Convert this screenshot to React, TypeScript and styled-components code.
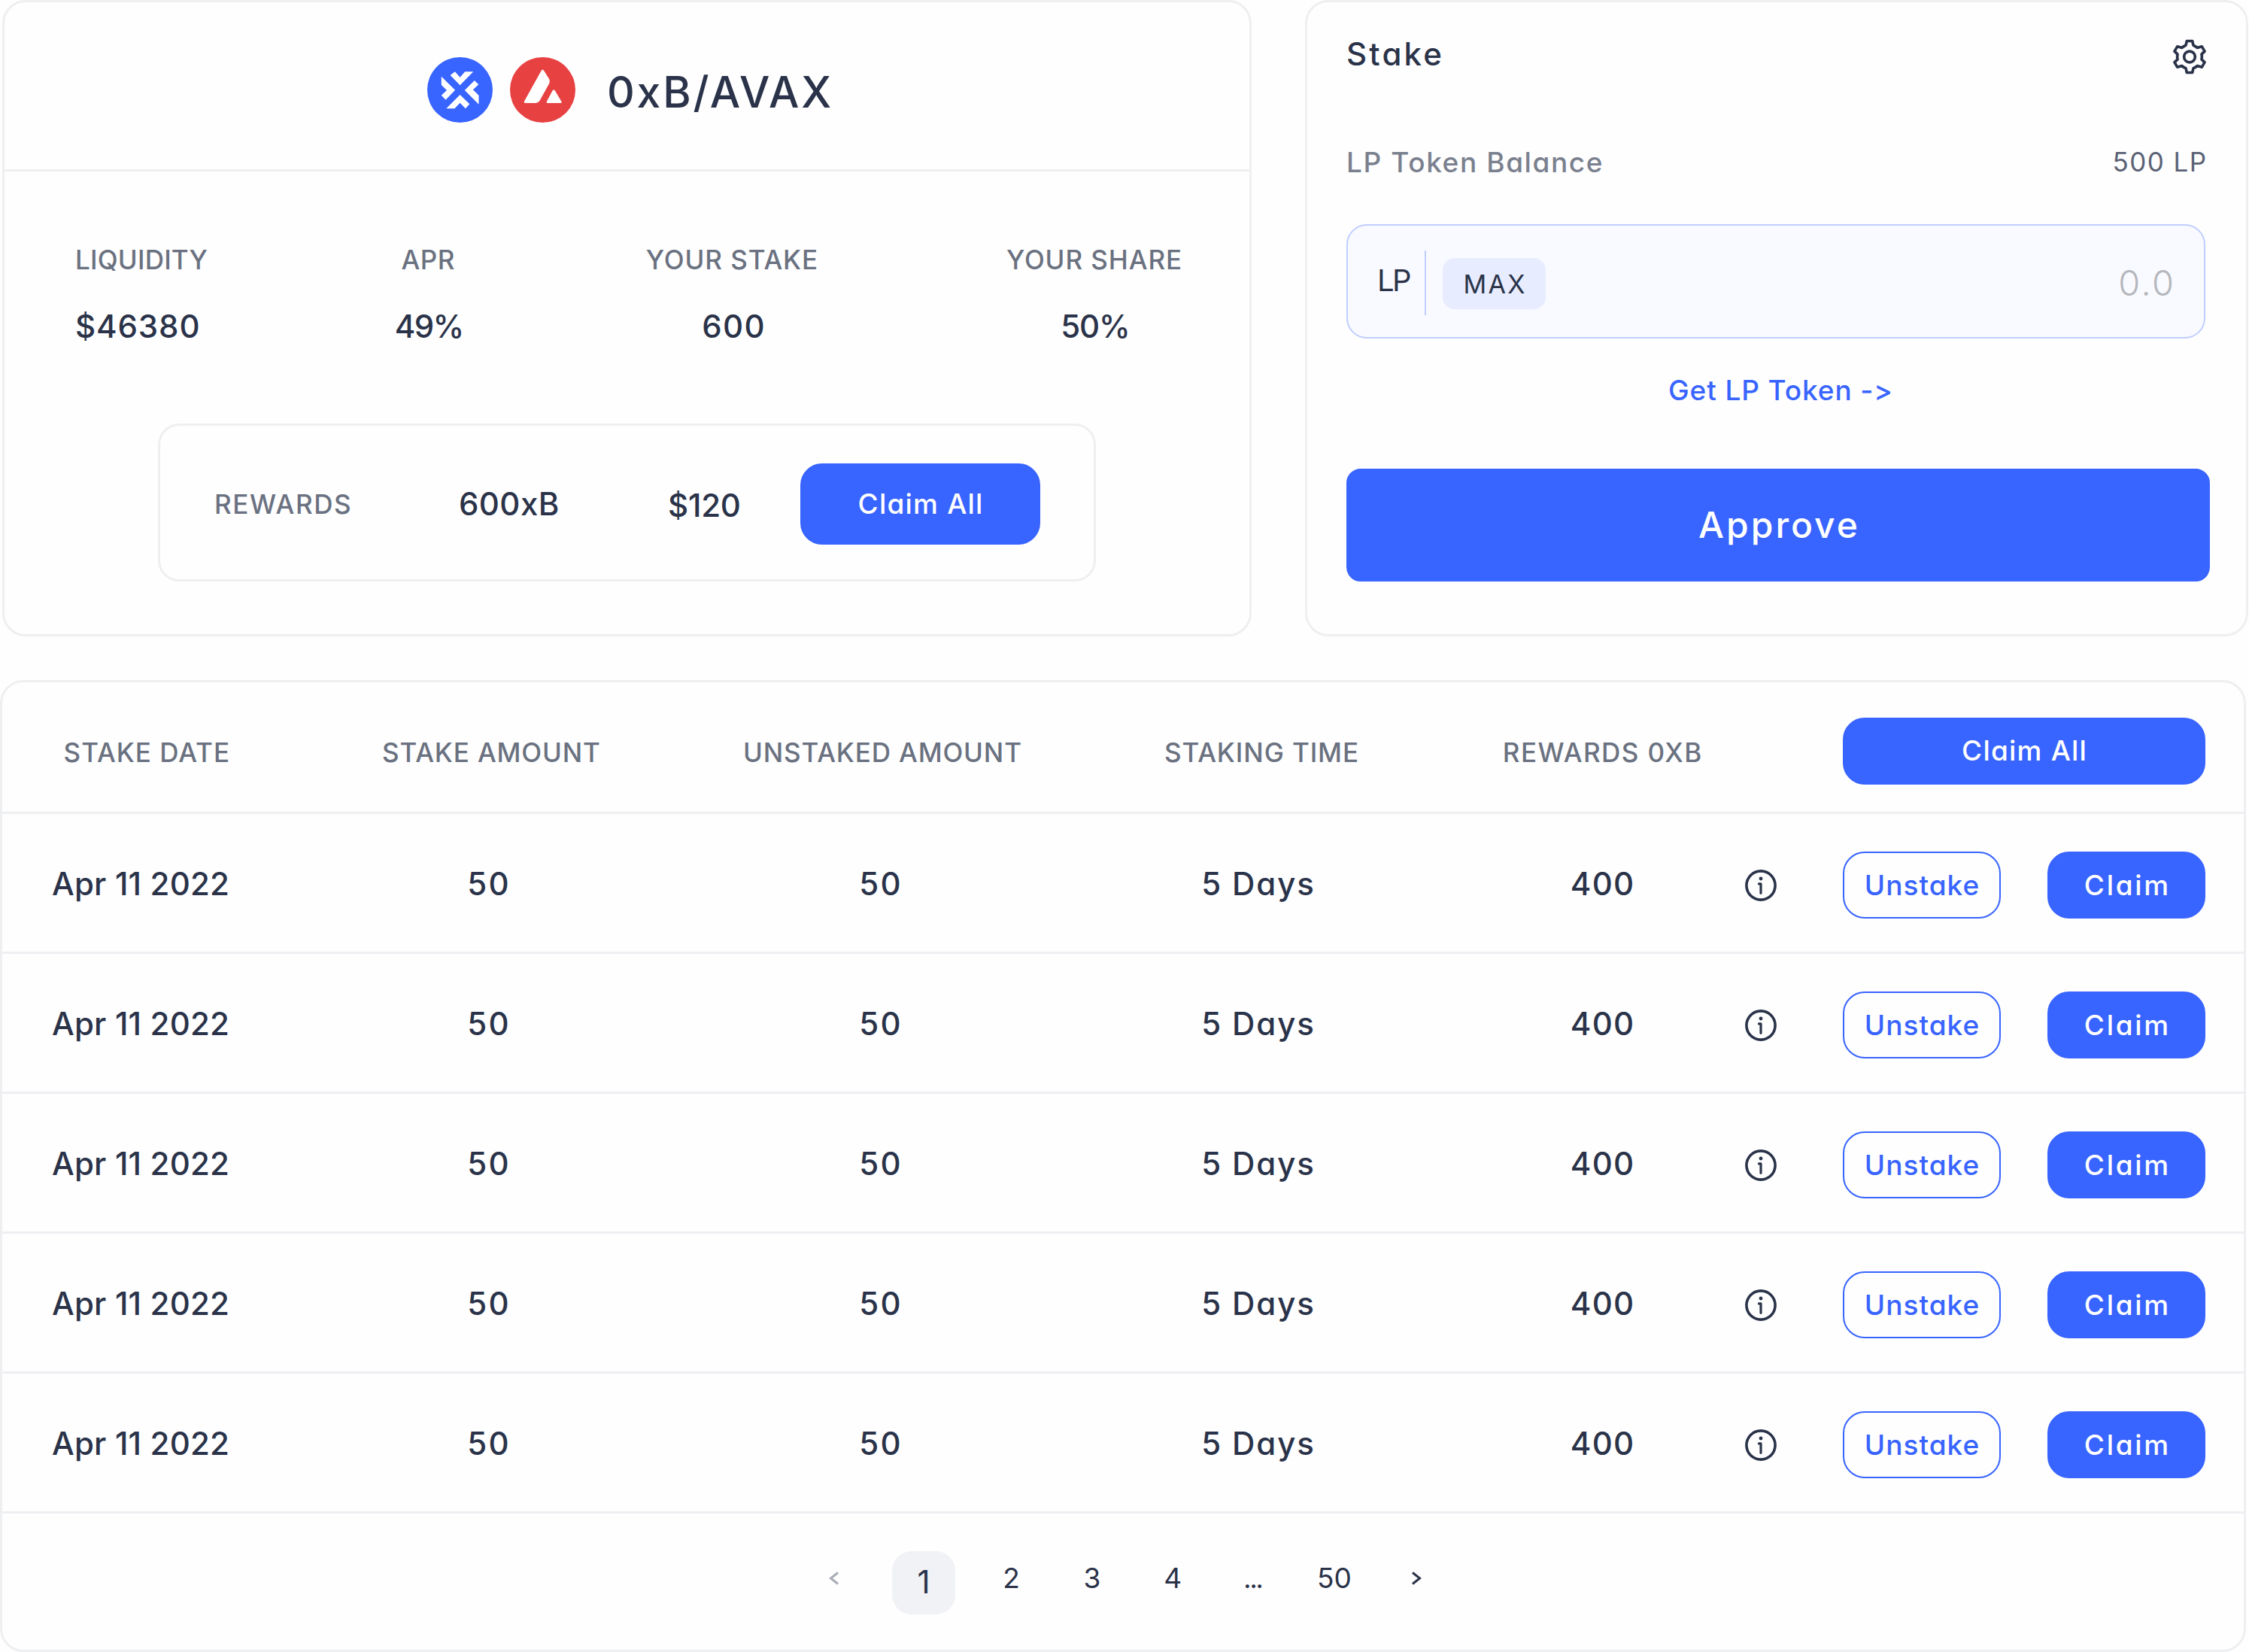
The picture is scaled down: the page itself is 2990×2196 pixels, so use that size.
import styled, { createGlobalStyle } from 'styled-components';

const GlobalStyle = createGlobalStyle`
  * {
    box-sizing: border-box;
  }

  body {
    margin: 0;
    background: #fefefe;
    color: #2a3349;
    font-family: Inter, "Liberation Sans", sans-serif;
    font-feature-settings: 'cv11', 'calt' 0;
  }

  button {
    font: inherit;
    font-feature-settings: inherit;
    padding: 0;
    border: none;
  }
`;

const Page = styled.main`
  width: 2990px;
  height: 2196px;
  overflow: hidden;
`;

const TopRow = styled.div`
  display: flex;
  gap: 71px;
  padding-left: 3px;
`;

const Panel = styled.section`
  border: 3px solid #eeeff1;
  border-radius: 31px;
`;

const Text = styled.span<{ $size: number; $spacing?: number; $weight?: number; $color?: string }>`
  display: inline-block;
  white-space: nowrap;
  line-height: 1;
  font-size: ${p => p.$size}px;
  font-weight: ${p => p.$weight || 500};
  letter-spacing: ${p => p.$spacing || 0}px;
  margin-right: ${p => -(p.$spacing || 0)}px;
  color: ${p => p.$color || 'inherit'};
`;

const Button = styled.button<{ $width: number; $height: number; $outline?: boolean }>`
  display: flex;
  align-items: center;
  justify-content: center;
  flex-shrink: 0;
  width: ${p => p.$width}px;
  height: ${p => p.$height}px;
  padding-bottom: 1px;
  border-radius: 29px;
  border: 2px solid #3864ff;
  background: ${p => (p.$outline ? '#fefefe' : '#3864ff')};
  color: ${p => (p.$outline ? '#3864ff' : '#fff')};
`;

/* pool */

const PoolPanel = styled(Panel)`
  width: 1661px;
  height: 846px;
`;

const PoolHead = styled.header`
  display: flex;
  align-items: center;
  height: 225px;
  padding: 11px 0 0 562px;
  border-bottom: 3px solid #eeeff1;
`;

const Logo = styled.svg`
  width: 87px;
  height: 87px;
  margin-right: 22.5px;
`;

const PoolName = styled.h1`
  display: flex;
  margin: 5px 0 0 20px;
`;

const Stats = styled.div`
  display: grid;
  grid-template-columns: 419px 100px 708px 255px;
  padding: 100px 0 0 94px;
`;

const Stat = styled.div`
  display: flex;
  flex-direction: column;
  align-items: center;
  gap: 50px;

  &:first-child {
    align-items: flex-start;
  }

  &:not(:first-child) > :last-child {
    padding-left: 4px;
  }
`;

const Rewards = styled.div`
  display: flex;
  align-items: center;
  width: 1247px;
  height: 210px;
  margin: 108px 0 0 204px;
  padding: 4px 0 0 72px;
  border: 3px solid #eeeff1;
  border-radius: 28px;
`;

const RewardItem = styled.div<{ $width: number; $down?: number }>`
  display: flex;
  width: ${p => p.$width}px;
  padding-top: ${p => p.$down || 0}px;
`;

/* stake */

const StakePanel = styled(Panel)`
  width: 1254px;
  height: 846px;
  padding: 48px 48px 0 52px;
`;

const StakeHead = styled.header`
  display: flex;
  justify-content: space-between;
  height: 48px;
  padding-right: 5px;
`;

const Gear = styled.svg`
  width: 44px;
  height: 47px;
  margin-top: 1px;
`;

const Balance = styled.div`
  display: flex;
  align-items: center;
  justify-content: space-between;
  margin-top: 98px;
  padding-right: 5px;
`;

const AmountBox = styled.div`
  display: flex;
  align-items: center;
  width: 1142px;
  height: 152px;
  margin-top: 64px;
  padding: 3px 40px 0 39px;
  border: 2px solid #c0ceff;
  border-radius: 27px;
  background: #f9faff;
`;

const Unit = styled.div`
  display: flex;
  width: 63px;
  padding-bottom: 5px;
`;

const Separator = styled.div`
  width: 2px;
  height: 86px;
  background: #c0ceff;
`;

const MaxButton = styled.button`
  display: flex;
  align-items: center;
  justify-content: center;
  width: 137px;
  height: 68px;
  margin: 2px auto 0 22px;
  padding-top: 3px;
  border-radius: 16px;
  background: #e7ecff;
  color: inherit;
`;

const GetToken = styled.a`
  display: flex;
  justify-content: center;
  margin: 50px 0 86px;
  padding-left: 6px;
  color: #3864ff;
`;

const Approve = styled(Button)`
  border-radius: 19px;
`;

/* table */

const TablePanel = styled(Panel)`
  width: 2986px;
  height: 1292px;
  margin-top: 58px;
`;

const HeadRow = styled.div`
  display: flex;
  align-items: center;
  height: 175px;
  padding-top: 10px;
  border-bottom: 3px solid #eeeff2;
`;

const Row = styled.div`
  display: flex;
  align-items: center;
  height: 186px;
  padding-top: 6px;
  border-bottom: 3px solid #eeeff2;
`;

const HeadCell = styled.div<{ $width: number; $gap: number; $shift: number; $right?: boolean }>`
  display: flex;
  justify-content: ${p => (p.$right ? 'flex-end' : 'center')};
  width: ${p => p.$width}px;
  margin-left: ${p => p.$gap}px;
  padding: 5px 0 0 ${p => p.$shift}px;
`;

const Cell = styled.div<{ $width: number; $gap: number; $right?: boolean }>`
  display: flex;
  justify-content: ${p => (p.$right ? 'flex-end' : 'center')};
  width: ${p => p.$width}px;
  margin-left: ${p => p.$gap}px;
  padding-bottom: 3px;
`;

const InfoIcon = styled.svg`
  width: 42px;
  height: 42px;
  margin-left: 40px;
`;

const Actions = styled.div<{ $gap: number }>`
  display: flex;
  justify-content: space-between;
  width: 482px;
  margin-left: ${p => p.$gap}px;
`;

const Pagination = styled.nav`
  display: flex;
  padding: 50px 0 0 1049px;
`;

const PageItem = styled.div<{ $width?: number }>`
  display: flex;
  align-items: center;
  justify-content: center;
  width: ${p => p.$width || 107.3}px;
  height: 84px;
  padding-bottom: 13px;
`;

const CurrentPage = styled.div`
  display: flex;
  align-items: center;
  justify-content: center;
  width: 84px;
  height: 84px;
  margin: 0 21px;
  padding-bottom: 3px;
  border-radius: 26px;
  background: #f1f2f5;
`;

const gray = '#6a7180'

const stats = [
    { label: 'LIQUIDITY', labelSpacing: 0.2, value: '$46380', valueSpacing: 0.9 },
    { label: 'APR', labelSpacing: 0.4, value: '49%', valueSpacing: -1.6 },
    { label: 'YOUR STAKE', labelSpacing: 0.9, value: '600', valueSpacing: 1.4 },
    { label: 'YOUR SHARE', labelSpacing: 0.9, value: '50%', valueSpacing: -1.2 },
]

const columns = [
    { key: 'date', label: 'STAKE DATE', width: 302, gap: 0, shift: 0, head: 1, body: 0.2 },
    { key: 'staked', label: 'STAKE AMOUNT', width: 360, gap: 164, shift: 8, head: 0.85, body: 2.2 },
    { key: 'unstaked', label: 'UNSTAKED AMOUNT', width: 400, gap: 141, shift: 6, head: 0.85, body: 2.2 },
    { key: 'time', label: 'STAKING TIME', width: 340, gap: 132, shift: 10, head: 0.9, body: 1.9 },
    { key: 'rewards', label: 'REWARDS 0XB', width: 300, gap: 138, shift: 0, head: 1.4, body: 1.3 },
] as const

const stakes = Array.from({ length: 5 }, (_, id) => ({
    id,
    date: 'Apr 11 2022',
    staked: '50',
    unstaked: '50',
    time: '5 Days',
    rewards: '400',
}))

const ZeroXLogo = () => (
    <Logo viewBox="0 0 87 87">
        <circle cx="43.5" cy="43.5" r="43.5" fill="#3864ff" />
        <g fill="#fff">
            <path d="M30.6 24 36.8 19.3 43.6 26.7 50.2 19.3H61.3L43.6 37.3Z" />
            <path d="M18.8 25.7 37.1 43.7 24.5 56.7 18.8 50.7 26 44 18.8 37Z" />
            <path d="M62.8 31 68.3 36.3 60.9 43.3 68.5 50.7V62.7L49.8 44Z" />
            <path d="M43.6 50 56.3 62.3 50.9 68.3 43.6 60.7 36.4 68.3H25.3Z" />
        </g>
    </Logo>
)

const AvaxLogo = () => (
    <Logo viewBox="0 0 87 87">
        <circle cx="43.5" cy="43.5" r="43.5" fill="#e84142" />
        <g fill="#fff">
            <path d="M20.5 61Q17.8 61 19.2 58.3L41.6 18Q43.4 14.8 45.2 18L51.8 28.6Q53.8 32 51.9 35.4L40 57Q37.8 61 33.5 61Z" />
            <path d="M50.6 61Q47.6 61 49.1 58.4L56.4 44.8Q58.2 41.6 60 44.8L68.2 58.4Q69.7 61 66.7 61Z" />
        </g>
    </Logo>
)

const GearIcon = () => (
    <Gear viewBox="-66 -70 132 140" fill="none" stroke="#2a3349" strokeWidth="11" strokeLinejoin="round">
        <path d="M-11 -63H11L15 -46Q23 -43 31 -36L49 -41L60 -22L48 -10Q50 0 48 10L60 22L49 41L31 36Q23 43 15 46L11 63H-11L-15 46Q-23 43 -31 36L-49 41L-60 22L-48 10Q-50 0 -48 -10L-60 -22L-49 -41L-31 -36Q-23 -43 -15 -46Z" />
        <circle r="22" />
    </Gear>
)

const Info = () => (
    <InfoIcon viewBox="0 0 42 42" fill="none" stroke="#2a3349">
        <circle cx="21" cy="21" r="19.1" strokeWidth="3.6" />
        <circle cx="21" cy="12" r="2.4" fill="#2a3349" stroke="none" />
        <path d="M18.4 18.9H21V31.3" strokeWidth="3.2" strokeLinecap="round" strokeLinejoin="round" />
    </InfoIcon>
)

const Arrow = ({ d, color }: { d: string; color: string }) => (
    <svg width="15" height="18" viewBox="0 0 15 18" fill="none" stroke={color} strokeWidth="3">
        <path d={d} />
    </svg>
)

const App = () => {
    return (
        <Page>
            <GlobalStyle />
            <TopRow>
                <PoolPanel>
                    <PoolHead>
                        <ZeroXLogo />
                        <AvaxLogo />
                        <PoolName>
                            <Text $size={57} $spacing={2.8}>0xB/AVAX</Text>
                        </PoolName>
                    </PoolHead>
                    <Stats>
                        {stats.map(s => (
                            <Stat key={s.label}>
                                <Text $size={35} $spacing={s.labelSpacing} $color={gray}>{s.label}</Text>
                                <Text $size={42} $spacing={s.valueSpacing}>{s.value}</Text>
                            </Stat>
                        ))}
                    </Stats>
                    <Rewards>
                        <RewardItem $width={325}>
                            <Text $size={35} $spacing={1.6} $color={gray}>REWARDS</Text>
                        </RewardItem>
                        <RewardItem $width={278}>
                            <Text $size={42} $spacing={0.4}>600xB</Text>
                        </RewardItem>
                        <RewardItem $width={176} $down={3}>
                            <Text $size={42} $spacing={-0.2}>$120</Text>
                        </RewardItem>
                        <Button $width={319} $height={108}>
                            <Text $size={37} $spacing={1.2}>Claim All</Text>
                        </Button>
                    </Rewards>
                </PoolPanel>

                <StakePanel>
                    <StakeHead>
                        <Text $size={42} $spacing={3.2}>Stake</Text>
                        <GearIcon />
                    </StakeHead>
                    <Balance>
                        <Text $size={37} $spacing={1.6} $color="#7a808e">LP Token Balance</Text>
                        <Text $size={35} $spacing={1.4} $weight={400} $color="#5b6274">500 LP</Text>
                    </Balance>
                    <AmountBox>
                        <Unit>
                            <Text $size={40} $spacing={-2.5} $weight={400}>LP</Text>
                        </Unit>
                        <Separator />
                        <MaxButton>
                            <Text $size={34} $spacing={2.2} $weight={400}>MAX</Text>
                        </MaxButton>
                        <Text $size={47} $spacing={2.4} $weight={300} $color="#b5b7bd">0.0</Text>
                    </AmountBox>
                    <GetToken>
                        <Text $size={37} $spacing={0.9}>Get LP Token -&gt;</Text>
                    </GetToken>
                    <Approve $width={1148} $height={150}>
                        <Text $size={48} $spacing={3}>Approve</Text>
                    </Approve>
                </StakePanel>
            </TopRow>

            <TablePanel>
                <HeadRow>
                    {columns.map(c => (
                        <HeadCell key={c.key} $width={c.width} $gap={c.gap} $shift={c.shift} $right={c.key === 'date'}>
                            <Text $size={35} $spacing={c.head} $color={gray}>{c.label}</Text>
                        </HeadCell>
                    ))}
                    <Actions $gap={170}>
                        <Button $width={482} $height={89}>
                            <Text $size={37} $spacing={1.2}>Claim All</Text>
                        </Button>
                    </Actions>
                </HeadRow>
                {stakes.map(stake => (
                    <Row key={stake.id}>
                        {columns.map(c => (
                            <Cell key={c.key} $width={c.width} $gap={c.gap} $right={c.key === 'date'}>
                                <Text $size={42} $spacing={c.body}>{stake[c.key]}</Text>
                            </Cell>
                        ))}
                        <Info />
                        <Actions $gap={88}>
                            <Button $width={210} $height={89} $outline>
                                <Text $size={37} $spacing={1}>Unstake</Text>
                            </Button>
                            <Button $width={210} $height={89}>
                                <Text $size={37} $spacing={2.7}>Claim</Text>
                            </Button>
                        </Actions>
                    </Row>
                ))}
                <Pagination>
                    <PageItem $width={113}>
                        <Arrow d="M13 1.5 3.5 9 13 16.5" color="#a9adb6" />
                    </PageItem>
                    <CurrentPage>
                        <Text $size={42} $weight={400}>1</Text>
                    </CurrentPage>
                    {['2', '3', '4', '...', '50'].map(n => (
                        <PageItem key={n}>
                            <Text $size={37} $spacing={n === '...' ? -2.5 : 0} $weight={400}>{n}</Text>
                        </PageItem>
                    ))}
                    <PageItem $width={112}>
                        <Arrow d="M2 1.5 11.5 9 2 16.5" color="#2a3349" />
                    </PageItem>
                </Pagination>
            </TablePanel>
        </Page>
    )
}

export default App
